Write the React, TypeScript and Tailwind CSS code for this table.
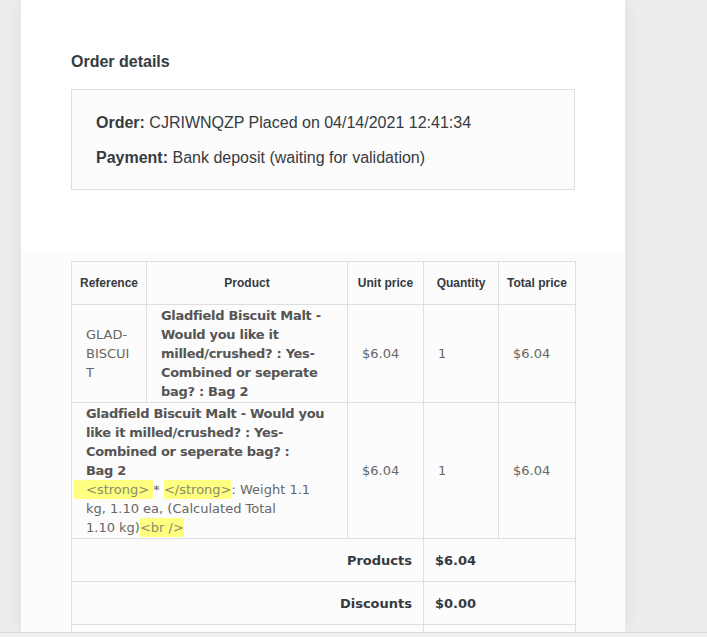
const sans = "font-['Liberation_Sans',Arial,sans-serif]";
const gothic = "font-['DejaVu_Sans',sans-serif]";

const Mark = ({ children, lead = false }: { children: React.ReactNode; lead?: boolean }) => (
  <span
    className={`inline-block bg-[#ffff80] text-[#8a8a6a] leading-[19px] ${lead ? "-ml-[12px] pl-[12px]" : ""}`}
  >
    {children}
  </span>
);

const cell = "border border-[#dfdfdf] align-middle";

const App = () => {
  return (
    <div className="flex flex-col h-[637px] w-[707px] overflow-hidden bg-[#ededed]">
      <div className="flex-1 overflow-hidden">
        <div className="ml-[21px] w-[604px] h-full bg-white shadow-[0_0_18px_rgba(0,0,0,0.07)]">
          <div className="px-[50px] pt-[52px]">
            <h2 className={`${sans} font-bold text-[16px] leading-[20px] text-[#363a41]`}>
              Order details
            </h2>
            <div
              className={`${sans} mt-[17px] w-[504px] border border-[#dfdfdf] bg-[#fcfcfc] px-[24px] pt-[23px] pb-[21px] text-[16px] leading-[20px] text-[#363a41] flex flex-col gap-[15px]`}
            >
              <p>
                <span className="font-bold">Order:</span> CJRIWNQZP Placed on 04/14/2021 12:41:34
              </p>
              <p>
                <span className="font-bold">Payment:</span> Bank deposit (waiting for validation)
              </p>
            </div>
          </div>
          <div className="mt-[61px] bg-[#fcfcfc] h-full px-[50px] pt-[10px]">
            <table className="w-[504px] table-fixed border-collapse">
              <colgroup>
                <col className="w-[75px]" />
                <col className="w-[201px]" />
                <col className="w-[76px]" />
                <col className="w-[75px]" />
                <col className="w-[77px]" />
              </colgroup>
              <thead>
                <tr className={`${sans} h-[43px] text-[12px] font-bold text-[#363a41]`}>
                  <th className={cell}>Reference</th>
                  <th className={cell}>Product</th>
                  <th className={cell}>Unit price</th>
                  <th className={cell}>Quantity</th>
                  <th className={cell}>Total price</th>
                </tr>
              </thead>
              <tbody className={`${gothic} text-[13px] leading-[19px]`}>
                <tr className="h-[98px]">
                  <td className={`${cell} px-[14px] text-[#666]`}>
                    GLAD-
                    <br />
                    BISCUI
                    <br />T
                  </td>
                  <td className={`${cell} px-[14px] font-bold text-[#555] whitespace-nowrap tracking-[-0.3px]`}>
                    Gladfield Biscuit Malt -
                    <br />
                    Would you like it
                    <br />
                    milled/crushed? : Yes-
                    <br />
                    Combined or seperate
                    <br />
                    bag? : Bag 2
                  </td>
                  <td className={`${cell} px-[14px] text-[#666]`}>$6.04</td>
                  <td className={`${cell} px-[14px] text-[#666]`}>1</td>
                  <td className={`${cell} px-[14px] text-[#666]`}>$6.04</td>
                </tr>
                <tr className="h-[136px]">
                  <td colSpan={2} className={`${cell} px-[14px] text-[#666] whitespace-nowrap`}>
                    <span className="font-bold text-[#555] tracking-[-0.3px]">
                      Gladfield Biscuit Malt - Would you
                      <br />
                      like it milled/crushed? : Yes-
                      <br />
                      Combined or seperate bag? :
                      <br />
                      Bag 2
                    </span>
                    <br />
                    <Mark lead>&lt;strong&gt;&nbsp;</Mark>*{" "}
                    <Mark>&lt;/strong&gt;</Mark>: Weight 1.1
                    <br />
                    kg, 1.10 ea, (Calculated Total
                    <br />
                    1.10 kg)<Mark>&lt;br /&gt;</Mark>
                  </td>
                  <td className={`${cell} px-[14px] text-[#666]`}>$6.04</td>
                  <td className={`${cell} px-[14px] text-[#666]`}>1</td>
                  <td className={`${cell} px-[14px] text-[#666]`}>$6.04</td>
                </tr>
                <tr className="h-[43px] font-bold text-[#363a41]">
                  <td colSpan={3} className={`${cell} px-[11px] text-right`}>
                    Products
                  </td>
                  <td colSpan={2} className={`${cell} px-[11px]`}>
                    $6.04
                  </td>
                </tr>
                <tr className="h-[43px] font-bold text-[#363a41]">
                  <td colSpan={3} className={`${cell} px-[11px] text-right`}>
                    Discounts
                  </td>
                  <td colSpan={2} className={`${cell} px-[11px]`}>
                    $0.00
                  </td>
                </tr>
                <tr className="h-[43px]">
                  <td colSpan={3} className={cell} />
                  <td colSpan={2} className={cell} />
                </tr>
              </tbody>
            </table>
          </div>
        </div>
      </div>
      <div className="h-[5px] shrink-0 border-t border-[#d9d9d9] bg-[#f0f0f0]" />
    </div>
  );
};

export default App;
